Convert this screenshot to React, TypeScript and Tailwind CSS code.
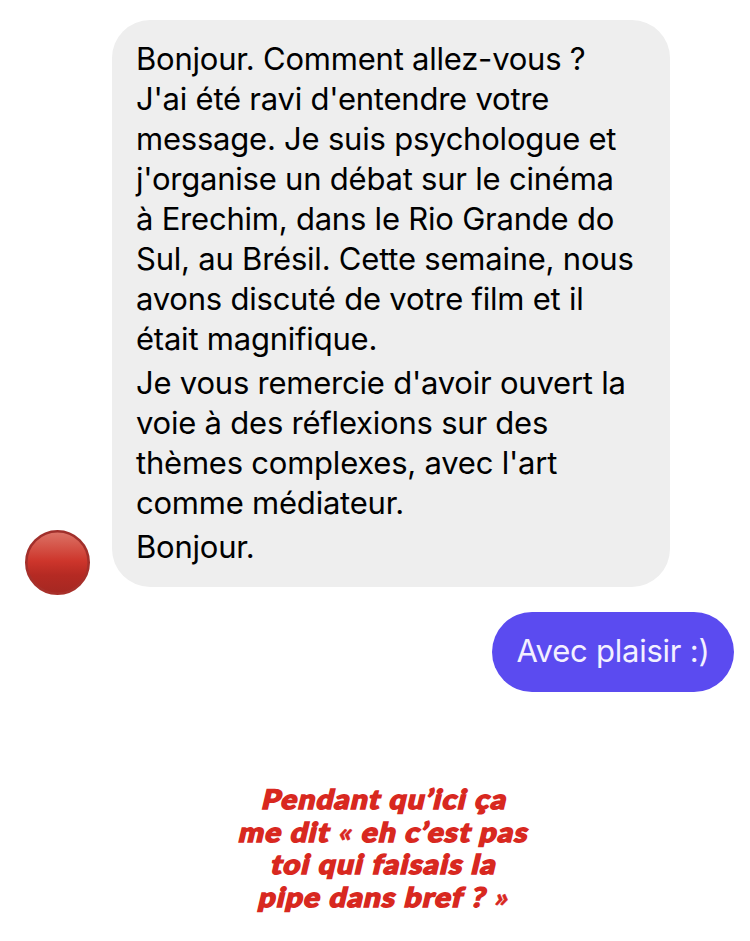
import React from 'react';
import clsx from 'clsx';

const paragraphs: string[][] = [
  [
    'Bonjour. Comment allez-vous ?',
    "J'ai été ravi d'entendre votre",
    'message. Je suis psychologue et',
    "j'organise un débat sur le cinéma",
    'à Erechim, dans le Rio Grande do',
    'Sul, au Brésil. Cette semaine, nous',
    'avons discuté de votre film et il',
    'était magnifique.',
  ],
  [
    "Je vous remercie d'avoir ouvert la",
    'voie à des réflexions sur des',
    "thèmes complexes, avec l'art",
    'comme médiateur.',
  ],
  ['Bonjour.'],
];

const caption = ['Pendant qu’ici ça', 'me dit « eh c’est pas', 'toi qui faisais la', 'pipe dans bref ? »'];

// Red disc used as the sender's avatar
const Avatar: React.FC = () => (
  <svg className="-mb-[9px] ml-6 mr-[21px] h-[67px] w-[67px] shrink-0" viewBox="0 0 67 67">
    <defs>
      <linearGradient id="disc" x1="0" y1="0" x2="0" y2="1">
        <stop offset="0" stopColor="#dc7468" />
        <stop offset="0.2" stopColor="#d65a4e" />
        <stop offset="0.48" stopColor="#cd352b" />
        <stop offset="0.7" stopColor="#b52a23" />
        <stop offset="1" stopColor="#a52822" />
      </linearGradient>
      <linearGradient id="rim" x1="0" y1="0" x2="0" y2="1">
        <stop offset="0" stopColor="#a02f2b" />
        <stop offset="1" stopColor="#a8302a" />
      </linearGradient>
    </defs>
    <circle cx="33.5" cy="33.5" r="31.2" fill="url(#disc)" stroke="url(#rim)" strokeWidth="2.6" />
  </svg>
);

const App: React.FC = () => (
  <main className="h-[941px] w-[750px] overflow-hidden bg-white pt-5 font-['Inter',sans-serif]">
    <div className="flex items-end">
      <Avatar />
      <div className="h-[567px] w-[558px] space-y-1 rounded-[38px] bg-[#eeeeee] pl-6 pt-[19px] text-[31px] leading-10 tracking-[-0.22px] text-black">
        {paragraphs.map((lines) => (
          <p key={lines[0]}>
            {lines.map((line) => (
              <span key={line} className="block whitespace-nowrap">
                {line}
              </span>
            ))}
          </p>
        ))}
      </div>
    </div>

    <div className="mr-4 mt-[25px] flex justify-end">
      <p className="flex h-20 w-[242px] items-center justify-center whitespace-nowrap rounded-full bg-[#5b4bf0] pb-0.5 text-[31px] tracking-[-0.24px] text-[#f3f0ff]">
        Avec plaisir :)
      </p>
    </div>

    <p className="ml-[20px] mt-[91px] flex flex-col items-center font-['Lato',sans-serif] text-[27px] font-black leading-[32.5px] tracking-[1.1px] text-[#d8281f]">
      {caption.map((line) => (
        <span key={line} className="-skew-x-12 scale-x-110 whitespace-nowrap">
          {/* guillemets get a thinner outline so that they stay open */}
          {line.split(/([«»])/).map((part, i) => (
            <span
              key={i}
              className={clsx(
                i % 2 ? '[-webkit-text-stroke:0.4px_#d8281f]' : '[-webkit-text-stroke:1.5px_#d8281f]',
              )}
            >
              {part}
            </span>
          ))}
        </span>
      ))}
    </p>
  </main>
);

export default App;
